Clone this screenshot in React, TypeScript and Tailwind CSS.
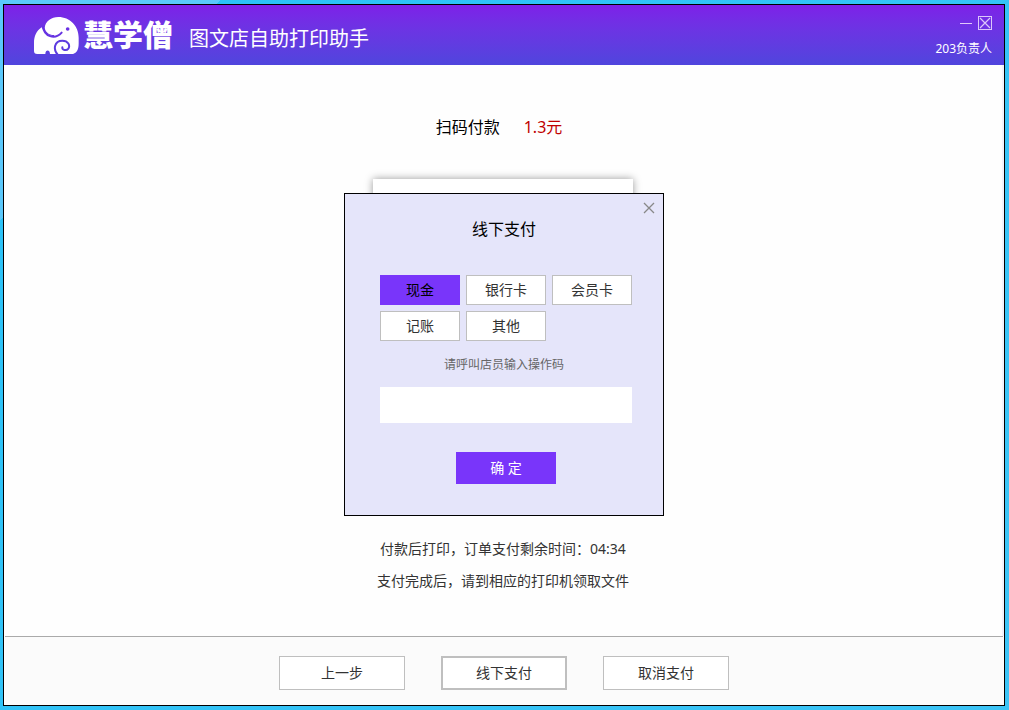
import { useState } from 'react'

const payMethods = ['现金', '银行卡', '会员卡', '记账', '其他']

function ElephantLogo() {
  return (
    <svg width="45" height="37" viewBox="0 0 135 111" fill="none" aria-hidden="true">
      {/* body */}
      <path
        d="M0 102V78C0 58 7 42 23 31C32 53 62 69 86 48L92 111H48C48 97 34 97 34 111H10C3 111 0 108 0 102Z"
        fill="#fff"
      />
      {/* head */}
      <path
        d="M32 33C34 12 52 0 73 0C108 0 134 27 134 62V80C134 99 127 111 112 111H70L60 54C44 54 35 46 32 33Z"
        fill="#fff"
      />
      {/* ear line */}
      <path d="M27 29C30 58 62 70 83 47" stroke="#6633e2" strokeWidth="6" strokeLinecap="round" />
      <circle cx="101" cy="36" r="5.5" fill="#6a2fe4" />
      {/* trunk */}
      <path
        d="M72 114C56 98 61 71 85 71C103 71 109 86 103 95C98 102 84 100 85 91"
        stroke="#5c3bdf"
        strokeWidth="6"
        strokeLinecap="round"
      />
    </svg>
  )
}

export default function App() {
  const [method, setMethod] = useState('现金')

  return (
    <div className="flex min-h-screen flex-col bg-[linear-gradient(135deg,#5ac8fb_0px,#5ac8fb_156px,#2bc2f7_156px,#3cc4f6_100%)] py-1 pr-1 pl-[3px] font-['Noto_Sans','Noto_Sans_CJK_SC',sans-serif] text-[#333]">
      <div className="relative flex flex-1 flex-col border border-black bg-[#fefefe]">
        {/* Title bar */}
        <header className="flex h-15 items-center justify-between bg-linear-to-b from-[#7d20e8] to-[#4f45dd] text-white">
          <div className="flex items-center pl-[30px]">
            <ElephantLogo />
            <span className="ml-1 text-[30px] leading-9 font-black">慧学僧</span>
            <h1 className="ml-4 pt-2 text-xl leading-9">图文店自助打印助手</h1>
          </div>
          <div className="flex flex-col items-end gap-2.5 pt-0.5 pr-3">
            <div className="flex gap-1">
              <button type="button" aria-label="最小化" className="flex h-4 w-4 items-center justify-center">
                <svg width="12" height="16" aria-hidden="true">
                  <path d="M0 8.5H12" stroke="#e0c8fa" />
                </svg>
              </button>
              <button type="button" aria-label="关闭窗口">
                <svg width="14" height="14" viewBox="0 0 14 14" fill="none" stroke="#dcc6fa" aria-hidden="true">
                  <rect x="0.5" y="0.5" width="13" height="13" />
                  <path d="M2 2L12 12M12 2L2 12" strokeWidth="1.2" />
                </svg>
              </button>
            </div>
            <span className="text-xs leading-4">203负责人</span>
          </div>
        </header>

        {/* Payment content */}
        <main className="flex flex-1 flex-col items-center border-r-2 border-[#f2f2fb] pt-12">
          <p className="flex gap-6 pr-2 text-base leading-7 text-black">
            扫码付款 <span className="text-[#c00000]">1.3元</span>
          </p>
          <div className="mt-[38px] h-[326px] w-[260px] bg-white shadow-[0_0_8px_rgba(0,0,0,0.4)]" />
          <p className="mt-8 text-sm leading-6">付款后打印，订单支付剩余时间：04:34</p>
          <p className="mt-2 text-sm leading-6">支付完成后，请到相应的打印机领取文件</p>
        </main>

        <footer className="mx-px flex h-[69px] justify-center gap-9 border-t border-[#aaa] bg-[#fbfbfb] pt-[19px]">
          <button type="button" className="h-[34px] w-[126px] border border-[#bfbfbf] bg-white text-sm">
            上一步
          </button>
          <button type="button" className="h-[34px] w-[126px] border-2 border-[#bfbfbf] bg-white text-sm">
            线下支付
          </button>
          <button type="button" className="h-[34px] w-[126px] border border-[#bfbfbf] bg-white text-sm">
            取消支付
          </button>
        </footer>

        {/* Offline payment dialog */}
        <div
          role="dialog"
          aria-labelledby="offline-title"
          className="absolute top-[188px] left-1/2 flex w-80 -translate-x-1/2 flex-col border border-black bg-[#e5e5fa] pt-[21px] pr-[31px] pb-[31px] pl-[35px]"
        >
          <button type="button" aria-label="关闭" className="absolute top-2 right-2">
            <svg width="12" height="12" viewBox="0 0 12 12" stroke="#888" strokeWidth="1.3" aria-hidden="true">
              <path d="M1 1L11 11M11 1L1 11" />
            </svg>
          </button>
          <h2 id="offline-title" className="pr-1 text-center text-base leading-7 text-black">
            线下支付
          </h2>
          <div className="mt-8 grid grid-cols-3 gap-1.5">
            {payMethods.map((name) => (
              <button
                key={name}
                type="button"
                aria-pressed={method === name}
                onClick={() => setMethod(name)}
                className={
                  method === name
                    ? 'h-[30px] bg-[#7935fa] text-sm text-black'
                    : 'h-[30px] border border-[#bfbfbf] bg-white text-sm'
                }
              >
                {name}
              </button>
            ))}
          </div>
          <label htmlFor="code" className="mt-3 pr-1 text-center text-xs leading-6 text-[#666]">
            请呼叫店员输入操作码
          </label>
          <input id="code" type="password" className="mt-2.5 h-9 bg-white px-2 text-sm outline-none" />
          <button type="button" className="mt-[29px] h-8 w-[100px] self-center bg-[#7935fa] text-sm text-white">
            确 定
          </button>
        </div>
      </div>
    </div>
  )
}
